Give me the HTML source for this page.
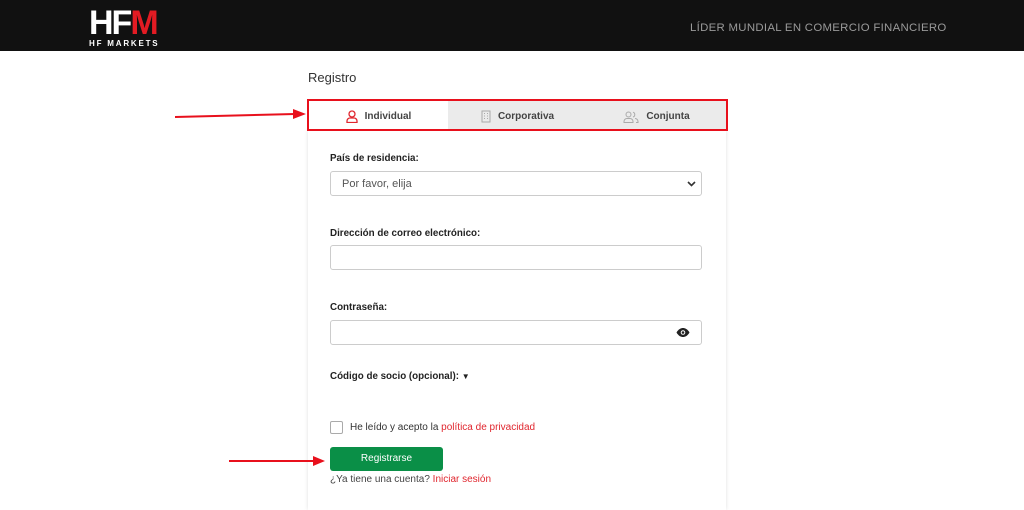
<!DOCTYPE html>
<html><head><meta charset="utf-8"><style>
*{box-sizing:border-box;margin:0;padding:0}
body{width:1024px;height:497px;overflow:hidden;background:#fff;font-family:"Liberation Sans",Arial,sans-serif;position:relative}
.hdr{position:absolute;left:0;top:0;width:1024px;height:51px;background:#111}
.logo{position:absolute;left:89px;top:8px;color:#fff;font-weight:bold;font-size:34px;letter-spacing:-2px;line-height:30px}
.logo .m{color:#e31b23}
.logo small{display:block;font-size:8px;letter-spacing:1.8px;line-height:10px;margin-top:1px}
.tag{position:absolute;left:690px;top:22px;color:#9a9a9a;font-size:11.4px;letter-spacing:.3px}
.title{position:absolute;left:308px;top:70px;font-size:13px;color:#333}
.card{position:absolute;left:308px;top:130px;width:418px;height:380px;background:#fff;box-shadow:0 0 4px rgba(0,0,0,.12)}
.tabs{position:absolute;left:307px;top:99px;width:421px;height:32px;border:2px solid #e8101c;display:flex;background:#ebebeb}
.tab{flex:1;display:flex;align-items:center;justify-content:center;font-size:10px;font-weight:bold;color:#444;gap:7px;padding-top:3px}
.tab.a{background:#fff}
.lbl{position:absolute;left:330px;font-size:9.8px;font-weight:bold;color:#222}
.inp{position:absolute;left:330px;width:372px;height:25px;border:1px solid #ccc;border-radius:3px;font-size:11px;color:#555;padding:6px 11px}
.red{color:#e0262e}
</style></head><body>
<div class="hdr"><div class="logo">HF<span class="m">M</span><small>HF MARKETS</small></div><div class="tag">LÍDER MUNDIAL EN COMERCIO FINANCIERO</div></div>
<div class="title">Registro</div>
<div class="card"></div>
<div class="tabs">
<div class="tab a"><svg width="12" height="13" viewBox="0 0 12 13" fill="none" stroke="#e0262e" stroke-width="1.3"><circle cx="6" cy="4" r="3"/><path d="M1 12.5v-1.5a3 3 0 0 1 3-3h4a3 3 0 0 1 3 3v1.5z"/></svg><span style="color:#444">Individual</span></div>
<div class="tab"><svg width="10" height="13" viewBox="0 0 10 13" fill="none" stroke="#aaa" stroke-width="1"><rect x="1" y="1" width="8" height="11"/><path d="M3 3.5h1M6 3.5h1M3 6h1M6 6h1M3 8.5h1M6 8.5h1"/></svg>Corporativa</div>
<div class="tab"><svg width="16" height="12" viewBox="0 0 16 12" fill="none" stroke="#aaa" stroke-width="1"><circle cx="5.5" cy="3.5" r="2.5"/><path d="M1 11.5v-1a3 3 0 0 1 3-3h3a3 3 0 0 1 3 3v1z"/><path d="M10 1.2a2.5 2.5 0 0 1 0 4.8M12 7.5a3 3 0 0 1 3 3v1h-2"/></svg>Conjunta</div>
</div>
<div class="lbl" style="top:153px">País de residencia:</div>
<div class="inp" style="top:171px">Por favor, elija<svg style="position:absolute;right:5px;top:9px" width="9" height="6" viewBox="0 0 9 6"><path d="M1 1l3.5 3.5L8 1" stroke="#333" stroke-width="1.6" fill="none"/></svg></div>
<div class="lbl" style="top:228px">Dirección de correo electrónico:</div>
<div class="inp" style="top:245px"></div>
<div class="lbl" style="top:302px">Contraseña:</div>
<div class="inp" style="top:320px"><svg style="position:absolute;right:11px;top:7px" width="14" height="9" viewBox="0 0 14 9"><path d="M0.5 4.5C2.5 1 5 0 7 0s4.5 1 6.5 4.5C11.5 8 9 9 7 9S2.5 8 .5 4.5z" fill="#222"/><circle cx="7" cy="4.5" r="2.3" fill="#fff"/><circle cx="7" cy="4.5" r="1.3" fill="#222"/></svg></div>
<div class="lbl" style="top:371px">Código de socio (opcional): <span style="font-size:8px">▼</span></div>
<div style="position:absolute;left:330px;top:421px;width:13px;height:13px;border:1px solid #aaa;border-radius:2px"></div>
<div style="position:absolute;left:350px;top:422px;font-size:10px;color:#333">He leído y acepto la <span class="red">política de privacidad</span></div>
<div style="position:absolute;left:330px;top:447px;width:113px;height:24px;background:#0a8f47;border-radius:3px;color:#fff;font-size:10px;text-align:center;line-height:24px">Registrarse</div>
<div style="position:absolute;left:330px;top:474px;font-size:10px;color:#444">¿Ya tiene una cuenta? <span class="red">Iniciar sesión</span></div>
<svg style="position:absolute;left:175px;top:108px" width="132" height="14"><path d="M0 9L120 6" stroke="#e8101c" stroke-width="2"/><path d="M131 6L118 1v10z" fill="#e8101c"/></svg>
<svg style="position:absolute;left:229px;top:454px" width="100" height="14"><path d="M0 7H86" stroke="#e8101c" stroke-width="2"/><path d="M96 7L84 2v10z" fill="#e8101c"/></svg>
</body></html>
